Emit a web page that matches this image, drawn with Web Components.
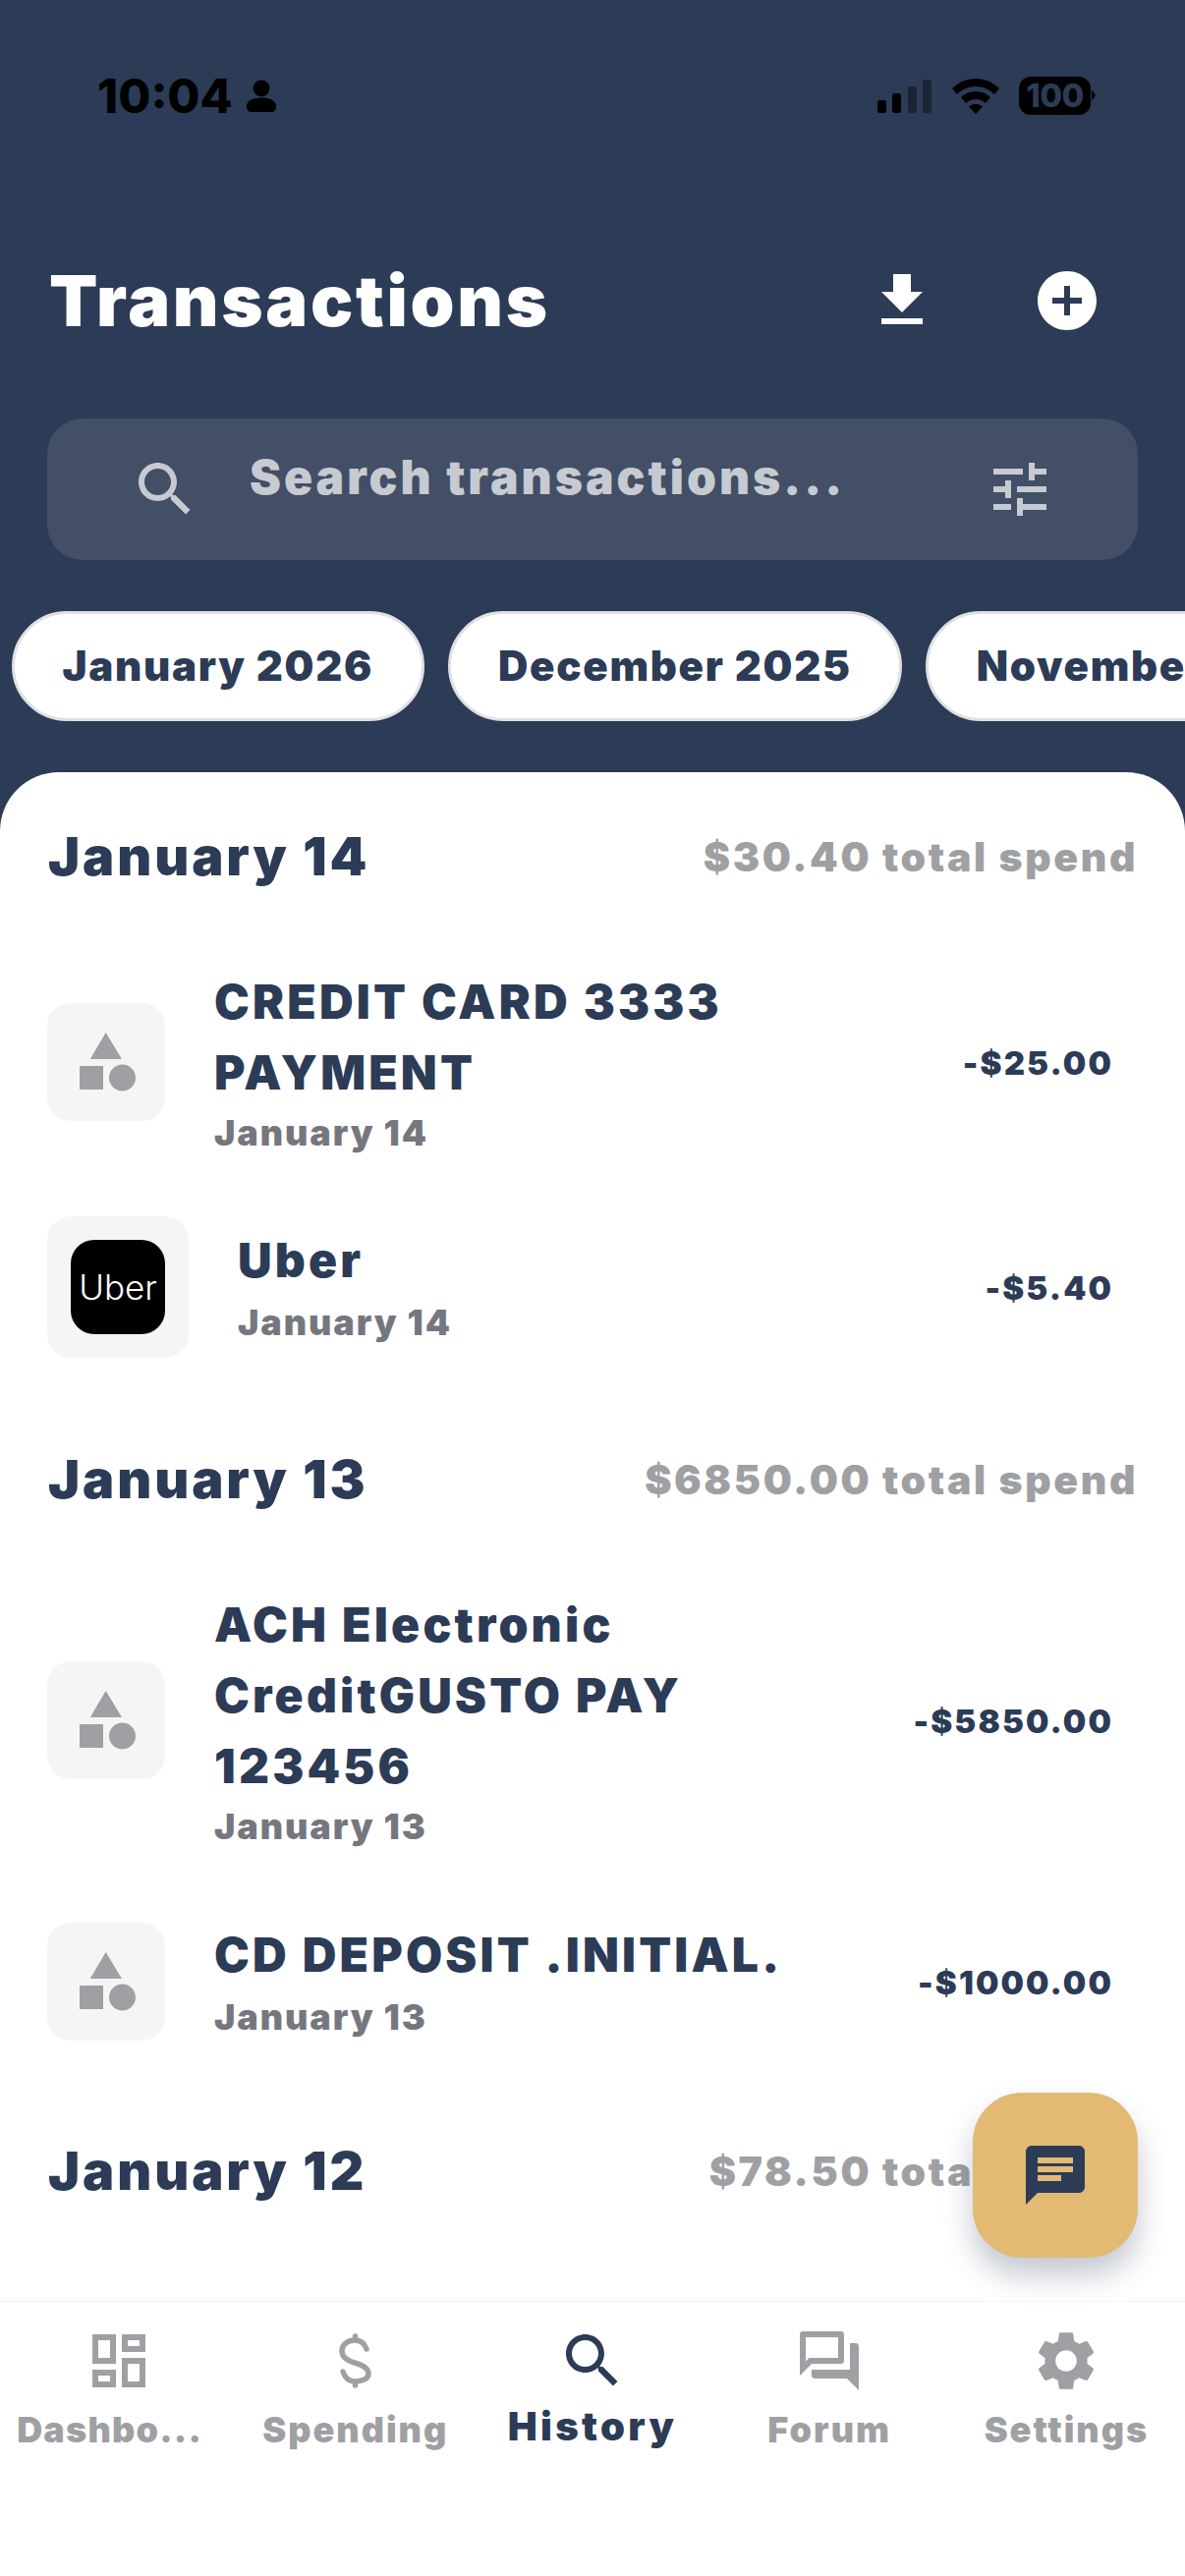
<!DOCTYPE html>
<html lang="en">
<head>
<meta charset="utf-8">
<title>Transactions</title>
<style>
  html, body { margin: 0; padding: 0; background: #2c3b56; }
  body { width: 1206px; height: 2622px; overflow: hidden; font-family: Inter, "Liberation Sans", sans-serif; }
</style>
</head>
<body>
<app-screen>
  <status-bar slot="top"></status-bar>
  <page-header slot="top"></page-header>
  <search-bar slot="top"></search-bar>
  <month-strip slot="top" months="January 2026|December 2025|November 2025"></month-strip>

  <day-group day="January 14" total="$30.40 total spend" style="--after:86px">
    <txn-row tall name="CREDIT CARD 3333 PAYMENT" date="January 14" amount="-$25.00"></txn-row>
    <txn-row name="Uber" date="January 14" amount="-$5.40" logo="uber"></txn-row>
  </day-group>
  <day-group day="January 13" total="$6850.00 total spend" style="--gap:68px;--after:92px">
    <txn-row tall name="ACH Electronic CreditGUSTO PAY 123456" date="January 13" amount="-$5850.00"></txn-row>
    <txn-row name="CD DEPOSIT .INITIAL." date="January 13" amount="-$1000.00"></txn-row>
  </day-group>
  <day-group day="January 12" total="$78.50 total spend"></day-group>

  <chat-fab slot="fab"></chat-fab>
  <tab-bar slot="tabs"></tab-bar>
</app-screen>

<script>
const NAVY = "#2c3b56";
const GREY = "#9fa0a4";

const ICONS = {
  download: "M19 9h-4V3H9v6H5l7 7 7-7zM5 18v2h14v-2H5z",
  add: "M12 2C6.48 2 2 6.48 2 12s4.48 10 10 10 10-4.48 10-10S17.52 2 12 2zm5 11h-4v4h-2v-4H7v-2h4V7h2v4h4v2z",
  search: "M15.5 14h-.79l-.28-.27C15.41 12.59 16 11.11 16 9.5 16 5.91 13.09 3 9.5 3S3 5.91 3 9.5 5.91 16 9.5 16c1.61 0 3.09-.59 4.23-1.57l.27.28v.79l5 4.99L20.49 19l-4.99-5zm-6 0C7.01 14 5 11.99 5 9.5S7.01 5 9.5 5 14 7.01 14 9.5 11.99 14 9.5 14z",
  tune: "M3 17v2h6v-2H3zM3 5v2h10V5H3zm10 16v-2h8v-2h-8v-2h-2v6h2zM7 9v2H3v2h4v2h2V9H7zm14 4v-2H11v2h10zm-6-4h2V7h4V5h-4V3h-2v6z",
  dashboard: "M19 5v2h-4V5h4M9 5v6H5V5h4m10 8v6h-4v-6h4M9 17v2H5v-2h4M21 3h-8v6h8V3zM11 3H3v10h8V3zm10 8h-8v10h8V11zm-10 4H3v6h8v-6z",
  forum: "M15 4v7H5.17l-.59.59-.58.58V4h11m1-2H3c-.55 0-1 .45-1 1v14l4-4h10c.55 0 1-.45 1-1V3c0-.55-.45-1-1-1zm5 4h-2v9H6v2c0 .55.45 1 1 1h11l4 4V7c0-.55-.45-1-1-1z",
  settings: "M19.14 12.94c.04-.3.06-.61.06-.94 0-.32-.02-.64-.07-.94l2.03-1.58c.18-.14.23-.41.12-.61l-1.92-3.32c-.12-.22-.37-.29-.59-.22l-2.39.96c-.5-.38-1.03-.7-1.62-.94l-.36-2.54c-.04-.24-.24-.41-.48-.41h-3.84c-.24 0-.43.17-.47.41l-.36 2.54c-.59.24-1.13.57-1.62.94l-2.39-.96c-.22-.08-.47 0-.59.22L2.74 8.87c-.12.21-.08.47.12.61l2.03 1.58c-.05.3-.09.63-.09.94s.02.64.07.94l-2.03 1.58c-.18.14-.23.41-.12.61l1.92 3.32c.12.22.37.29.59.22l2.39-.96c.5.38 1.03.7 1.62.94l.36 2.54c.05.24.24.41.48.41h3.84c.24 0 .44-.17.47-.41l.36-2.54c.59-.24 1.13-.56 1.62-.94l2.39.96c.22.08.47 0 .59-.22l1.92-3.32c.12-.22.07-.47-.12-.61l-2.01-1.58zM12 15.6c-1.98 0-3.6-1.62-3.6-3.6s1.62-3.6 3.6-3.6 3.6 1.62 3.6 3.6-1.62 3.6-3.6 3.6z",
  chat: "M20 2H4c-1.1 0-1.99.9-1.99 2L2 22l4-4h14c1.1 0 2-.9 2-2V4c0-1.1-.9-2-2-2zM6 9h12v2H6V9zm8 5H6v-2h8v2zm4-6H6V6h12v2z",
};

function icon(name, size, color) {
  return `<svg width="${size}" height="${size}" viewBox="0 0 24 24" fill="${color}" style="display:block;flex:none"><path d="${ICONS[name]}"/></svg>`;
}

// small helper so each element below stays a class + its template
function shadow(el, html) {
  el.attachShadow({ mode: "open" }).innerHTML = html;
}

customElements.define("app-screen", class extends HTMLElement {
  constructor() {
    super();
    shadow(this, `
      <style>
        :host { display: flex; flex-direction: column; position: relative; width: 1206px; height: 2622px; background: ${NAVY}; overflow: hidden; }
        .sheet { flex: 1; min-height: 0; background: #fff; border-radius: 60px 60px 0 0; overflow: hidden; padding: 48px 48px 0; }
        .fab { position: absolute; right: 48px; top: 2130px; }
      </style>
      <slot name="top"></slot>
      <div class="sheet"><slot></slot></div>
      <slot name="tabs"></slot>
      <div class="fab"><slot name="fab"></slot></div>
    `);
  }
});

customElements.define("status-bar", class extends HTMLElement {
  constructor() {
    super();
    shadow(this, `
      <style>
        :host { display: flex; align-items: center; justify-content: space-between; height: 97px; padding: 49px 89px 0 99px; color: #000; }
        .left { display: flex; align-items: center; gap: 13px; font: 800 48px/1 Inter, sans-serif; }
        .right { display: flex; align-items: center; gap: 20px; }
        .batt { position: relative; width: 73px; height: 39px; background: #000; border-radius: 12px; color: ${NAVY}; font: 800 33px/39px Inter, sans-serif; text-align: center; letter-spacing: -.5px; margin-right: 7px; }
        .batt::after { content: ""; position: absolute; right: -5px; top: 13px; border-left: 4px solid #000; border-top: 6px solid transparent; border-bottom: 6px solid transparent; }
      </style>
      <div class="left">10:04
        <svg width="32" height="34" viewBox="0 0 32 34" fill="#000"><circle cx="16" cy="9" r="8.4"/><path d="M1 27c0-6 7-8.500 15-8.500S31 21 31 27c0 3-1.500 6-4 6H5c-2.500 0-4-3-4-6z"/></svg>
      </div>
      <div class="right">
        <svg width="56" height="36" viewBox="0 0 56 36"><g fill="#000"><rect x="0" y="22" width="9" height="13" rx="2.500"/><rect x="15" y="15" width="9" height="20" rx="2.500"/></g><g fill="#000" opacity=".38"><rect x="31" y="8" width="9" height="27" rx="2.500"/><rect x="46" y="1" width="9" height="34" rx="2.500"/></g></svg>
        <svg width="48" height="36" viewBox="0 0 48 36" fill="#000"><path d="M24 0c9 0 17 3.500 24 10l-5 6C38 11 31.500 8 24 8S10 11 5 16l-5-6C7 3.500 15 0 24 0z"/><path d="M24 13c6 0 11 2 15 6l-5 6c-3-2.800-6.300-4-10-4s-7 1.200-10 4l-5-6c4-4 9-6 15-6z"/><path d="M24 26c2.800 0 5 .8 7 2.500L24 36l-7-7.500c2-1.700 4.200-2.500 7-2.500z"/></svg>
        <div class="batt">100</div>
      </div>
    `);
  }
});

customElements.define("page-header", class extends HTMLElement {
  constructor() {
    super();
    shadow(this, `
      <style>
        :host { display: flex; align-items: center; height: 72px; margin-top: 124px; padding: 0 84px 0 50px; color: #fff; }
        h1 { flex: 1; margin: 0; font: 900 72px/72px Inter, sans-serif; letter-spacing: 2.700px; }
        .btns { display: flex; gap: 96px; }
      </style>
      <h1>Transactions</h1>
      <div class="btns">${icon("download", 72, "#fff")}${icon("add", 72, "#fff")}</div>
    `);
  }
});

customElements.define("search-bar", class extends HTMLElement {
  constructor() {
    super();
    shadow(this, `
      <style>
        :host { display: flex; align-items: center; height: 144px; margin: 84px 48px 0; padding: 0 84px; background: #424f66; border-radius: 36px; }
        .q { flex: 1; margin: 0 0 24px 50px; color: #c7cad1; font: 900 48px/56px Inter, sans-serif; letter-spacing: 3px; white-space: nowrap; }
      </style>
      ${icon("search", 72, "#c7cad1")}
      <div class="q">Search transactions...</div>
      ${icon("tune", 72, "#c7cad1")}
    `);
  }
});

customElements.define("month-strip", class extends HTMLElement {
  constructor() {
    super();
    const pills = this.getAttribute("months").split("|").map((m) => `<div class="pill">${m}</div>`).join("");
    shadow(this, `
      <style>
        :host { display: flex; gap: 24px; margin-top: 52px; padding: 0 12px 52px; overflow: hidden; }
        .pill { flex: none; height: 112px; box-sizing: border-box; padding: 0 48.500px; display: flex; align-items: center; background: #fff; border: 3px solid #dfe0e3; border-radius: 56px; color: ${NAVY}; font: 900 42px/1 Inter, sans-serif; letter-spacing: 1.700px; white-space: nowrap; }
      </style>
      ${pills}
    `);
  }
});

customElements.define("day-group", class extends HTMLElement {
  constructor() {
    super();
    shadow(this, `
      <style>
        :host { display: block; margin-bottom: var(--after, 60px); }
        .head { display: flex; align-items: center; justify-content: space-between; height: 76px; margin-bottom: 72px; }
        .day { margin-left: 1px; color: ${NAVY}; font: 900 54px/76px Inter, sans-serif; letter-spacing: 2.900px; }
        .total { color: ${GREY}; font: 900 41px/76px Inter, sans-serif; letter-spacing: 2.600px; }
        .rows { display: flex; flex-direction: column; gap: var(--gap, 58px); }
      </style>
      <div class="head"><div class="day">${this.getAttribute("day")}</div><div class="total">${this.getAttribute("total")}</div></div>
      <div class="rows"><slot></slot></div>
    `);
  }
});

customElements.define("txn-row", class extends HTMLElement {
  constructor() {
    super();
    const logo = this.getAttribute("logo");
    const art = logo === "uber"
      ? `<div class="tile uber"><div class="mark">Uber</div></div>`
      : `<div class="tile"><svg width="120" height="120" viewBox="0 0 120 120" fill="${GREY}"><path d="M59.700 30 76 57H43.700z"/><rect x="33" y="64" width="24" height="24"/><circle cx="76.500" cy="76" r="13.500"/></svg></div>`;
    shadow(this, `
      <style>
        :host { display: flex; align-items: center; }
        :host([tall]) .text { padding-top: 2px; }
        :host([tall]) .date { margin-top: -2px; }
        .tile { flex: none; width: 120px; height: 120px; display: flex; align-items: center; justify-content: center; background: #f4f6f6; border-radius: 24px; }
        .tile.uber { width: 144px; height: 144px; }
        .mark { width: 96px; height: 96px; background: #000; border-radius: 24px; color: #fff; font: 300 35px/97px Inter, sans-serif; text-align: center; }
        .text { flex: none; width: 600px; margin-left: 50px; }
        .name { color: ${NAVY}; font: 900 48px/72px Inter, sans-serif; letter-spacing: 3.200px; }
        .date { color: #75777f; font: 900 36px/54px Inter, sans-serif; letter-spacing: 1.900px; }
        .amt { margin: 2px 25px 0 auto; color: ${NAVY}; font: 900 33px/1 Inter, sans-serif; letter-spacing: 2.100px; }
      </style>
      ${art}
      <div class="text"><div class="name">${this.getAttribute("name")}</div><div class="date">${this.getAttribute("date")}</div></div>
      <div class="amt">${this.getAttribute("amount")}</div>
    `);
  }
});

customElements.define("chat-fab", class extends HTMLElement {
  constructor() {
    super();
    shadow(this, `
      <style>
        :host { display: flex; align-items: center; justify-content: center; width: 168px; height: 168px; background: #e3ba74; border-radius: 50px; box-shadow: 0 18px 30px rgba(44, 59, 86, .28); }
      </style>
      ${icon("chat", 72, NAVY)}
    `);
  }
});

customElements.define("tab-bar", class extends HTMLElement {
  constructor() {
    super();
    const tabs = [
      { label: "Dashbo...", glyph: icon("dashboard", 72, GREY), cls: "first" },
      { label: "Spending", glyph: `<svg width="72" height="72" viewBox="0 0 72 72" fill="none" stroke="${GREY}" stroke-width="5.500" stroke-linecap="round"><path d="M47 24C45 18 41 15 35 15 27 15 22 20 22 26 22 33 28 36 35 38 42 40 49 43 49 49 49 54 43 57 35 57 28 57 25 53 23 47M35.500 11v4M35.500 57v4"/></svg>` },
      { label: "History", glyph: icon("search", 72, NAVY), cls: "on" },
      { label: "Forum", glyph: icon("forum", 72, GREY) },
      { label: "Settings", glyph: icon("settings", 72, GREY) },
    ];
    shadow(this, `
      <style>
        :host { display: grid; grid-template-columns: repeat(5, 1fr); height: 280px; padding-top: 24px; box-sizing: border-box; background: #fff; border-top: 1px solid #f4f4f4; }
        .tab { display: flex; flex-direction: column; align-items: center; color: ${GREY}; font: 900 36px/46px Inter, sans-serif; letter-spacing: 2px; gap: 11px; white-space: nowrap; }
        .tab.on { color: ${NAVY}; font: 900 40px/46px Inter, sans-serif; letter-spacing: 3.300px; gap: 8px; }
        .first span { margin-left: -18px; letter-spacing: 1.200px; }
      </style>
      ${tabs.map((t) => `<div class="tab ${t.cls || ""}">${t.glyph}<span>${t.label}</span></div>`).join("")}
    `);
  }
});
</script>
</body>
</html>
